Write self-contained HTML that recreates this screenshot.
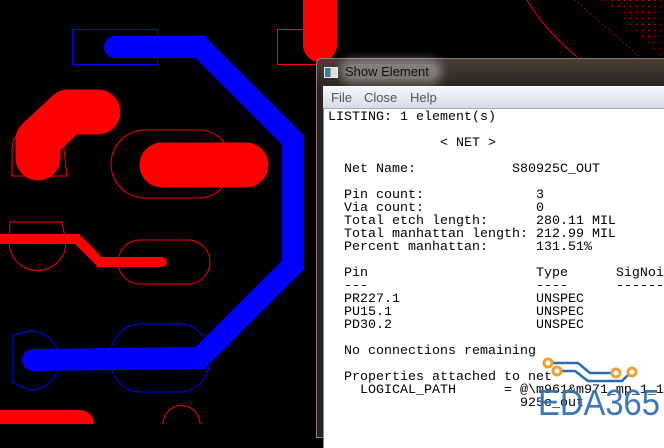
<!DOCTYPE html>
<html><head><meta charset="utf-8"><style>
*{margin:0;padding:0;box-sizing:border-box}
body{width:664px;height:424px;overflow:hidden;background:#000;position:relative;font-family:"Liberation Sans",sans-serif}
svg.pcb{position:absolute;left:0;top:0}
.win{position:absolute;left:316px;top:58px;width:360px;height:380px;background:linear-gradient(#4a3e38,#2a2220 30px);border:1px solid #8a7f78;border-radius:6px 0 0 0}
.title{position:absolute;left:28px;top:5px;font-size:13px;color:#111;background:rgba(255,255,255,0.35);padding:0 8px 0 0;border-radius:8px;box-shadow:0 0 8px 6px rgba(255,255,255,0.3)}
.ico{position:absolute;left:7px;top:8px;width:14px;height:11px;background:linear-gradient(90deg,#3a7a9a 0 45%,#ddd 45%);border:1px solid #eee}
.menu{position:absolute;left:6px;top:27px;width:360px;height:22px;background:linear-gradient(#f4f6fb,#d6dcea);border-top:1px solid #fff;font-size:13px;color:#555}
.menu span{position:absolute;top:3px}
.content{position:absolute;left:6px;top:49px;width:360px;height:340px;background:#fff;border-top:1px solid #aaa;border-left:1px solid #888}
pre{position:absolute;left:4px;top:2px;font-family:"Liberation Mono",monospace;font-size:13.33px;line-height:13px;color:#000}
</style></head><body>
<svg class="pcb" width="664" height="424">
 <g fill="none" stroke="#f00" stroke-width="1">
  <rect x="277.5" y="29.5" width="43" height="35"/>
  <path d="M12 150 A26 26 0 0 1 64 150 L67 176 L12 176 Z"/>
  <path d="M145 130 L198 130 A34 34 0 0 1 198 198 L145 198 A34 34 0 0 1 145 130 Z"/>
  <path d="M10 222 L62 222 L66 242 A28 28 0 0 1 9 242 Z"/>
  <path d="M140 240 L188 240 A22 22 0 0 1 188 284 L140 284 A22 22 0 0 1 140 240 Z"/>
  <path d="M163 424 A18 18 0 0 1 200 424"/>
  <path d="M527 0 Q545 30 577 57"/>
  <path d="M575 0 L640 57" stroke-dasharray="1 3"/>
 </g>
 <defs><pattern id="dots" width="6" height="6" patternUnits="userSpaceOnUse"><rect width="1" height="1" fill="#f00"/></pattern></defs>
 <path d="M600 0 L664 0 L664 57 L662 57 Z" fill="url(#dots)"/>
 <g fill="none" stroke="#00f" stroke-width="1">
  <rect x="72.5" y="29.5" width="85" height="35"/>
  <path d="M13 335 L30 331 A28 28 0 0 1 30 390 L13 383 Z"/>
  <path d="M140 324 L180 324 A30 34 0 0 1 180 392 L140 392 A30 34 0 0 1 140 324 Z"/>
 </g>
 <g fill="none" stroke-linecap="round" stroke-linejoin="round">
  <path d="M115 47 L200 47 L293 140 L293 265 L200 358 L33 360" stroke="#00f" stroke-width="22" stroke-linejoin="miter" stroke-linecap="butt"/>
  <circle cx="115" cy="47" r="11" fill="#00f" stroke="none"/>
  <circle cx="33" cy="360" r="11" fill="#00f" stroke="none"/>
  <path d="M38 158 L38 140 L68 112 L98 112" stroke="#f00" stroke-width="45"/>
  <path d="M162 165 L246 165" stroke="#f00" stroke-width="45"/>
  <path d="M0 239 L77 239 L100 262 L162 262" stroke="#f00" stroke-width="10" stroke-linecap="round" stroke-linejoin="miter"/>
  <path d="M320 0 L320 45" stroke="#f00" stroke-width="34"/>
  <path d="M0 424 L80 424" stroke="#f00" stroke-width="28"/>
 </g>
</svg>
<div class="win">
 <div class="ico"></div><div class="title">Show Element</div>
 <div class="menu"><span style="left:8px">File</span><span style="left:41px">Close</span><span style="left:87px">Help</span></div>
 <div class="content"><pre>LISTING: 1 element(s)

              &lt; NET &gt;

  Net Name:            S80925C_OUT

  Pin count:              3
  Via count:              0
  Total etch length:      280.11 MIL
  Total manhattan length: 212.99 MIL
  Percent manhattan:      131.51%

  Pin                     Type      SigNoise
  ---                     ----      --------
  PR227.1                 UNSPEC
  PU15.1                  UNSPEC
  PD30.2                  UNSPEC

  No connections remaining

  Properties attached to net
    LOGICAL_PATH      = @\m961&amp;m971_mp_1_1
                        925c_out</pre></div>
</div>
<svg style="position:absolute;left:530px;top:350px" width="134" height="74">
 <g fill="none" stroke="#2a6db5" stroke-width="2.5">
  <path d="M22 13 L48 13 L60 23 L82 23"/>
  <path d="M31 21 L45 21 L58 31 L92 31 L100 23"/>
 </g>
 <g fill="#fff" stroke="#f0a030" stroke-width="3">
  <circle cx="18" cy="13" r="4"/><circle cx="27" cy="21" r="4"/><circle cx="86" cy="23" r="4"/><circle cx="102" cy="22" r="4"/>
 </g>
 <text x="8" y="65" font-family="Liberation Sans,sans-serif" font-size="36" fill="#2a6db5" textLength="122" lengthAdjust="spacingAndGlyphs" opacity=".92">EDA365</text>
</svg>
</body></html>
